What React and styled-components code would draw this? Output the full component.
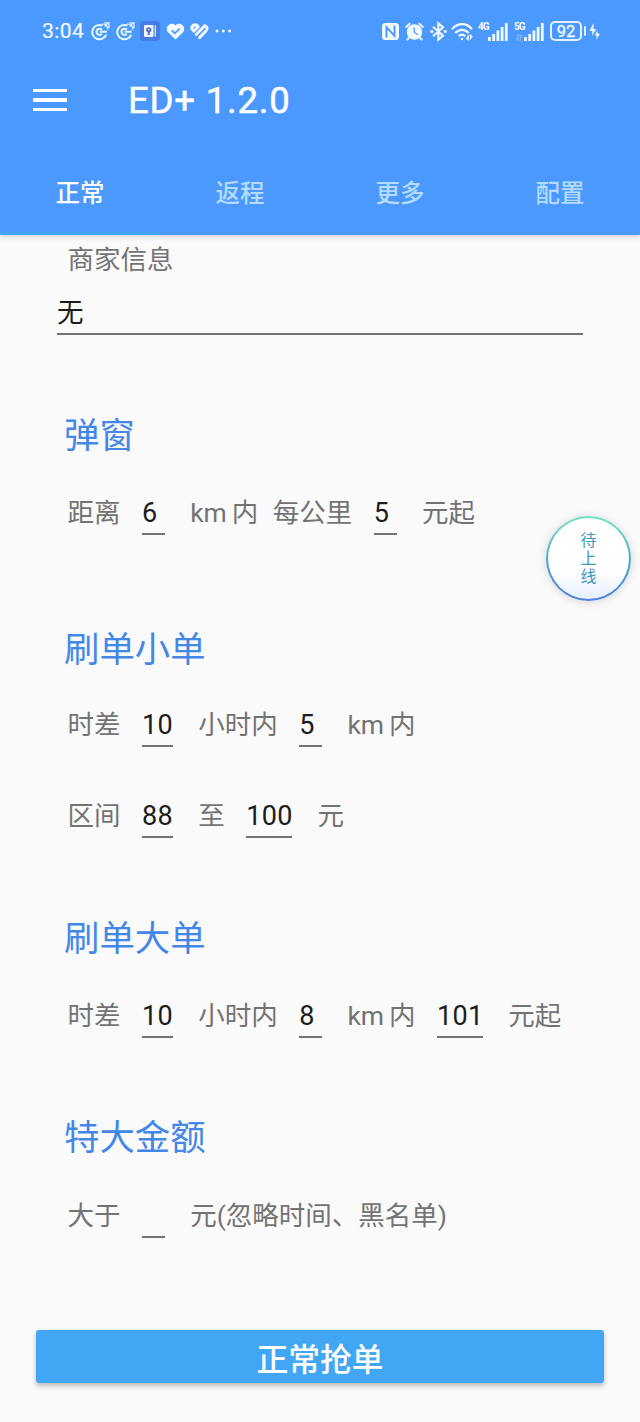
import React, { useState } from "react";
import styled, { createGlobalStyle } from "styled-components";

const tabs = ["正常", "返程", "更多", "配置"];

export default function App() {
  const [active, setActive] = useState(0);

  return (
    <>
      <GlobalStyle />
      <Screen>
        <Header>
          <StatusBar />
          <TitleBar>
            <MenuButton aria-label="menu">
              <MenuLine />
              <MenuLine />
              <MenuLine />
            </MenuButton>
            <Title>ED+ 1.2.0</Title>
          </TitleBar>
          <Tabs>
            {tabs.map((tab, i) => (
              <Tab key={tab} $active={i === active} onClick={() => setActive(i)}>
                {tab}
              </Tab>
            ))}
          </Tabs>
        </Header>

        <Content>
          <FieldLabel>商家信息</FieldLabel>
          <WideField>无</WideField>

          <Section $top={77}>
            <Heading $bottom={29}>弹窗</Heading>
            <Row>
              <Label>距离</Label>
              <Value>6</Value>
              <Label><Unit>km</Unit>内</Label>
              <NextLabel>每公里</NextLabel>
              <Value>5</Value>
              <Label>元起</Label>
            </Row>
          </Section>

          <Section $top={91}>
            <Heading $bottom={27}>刷单小单</Heading>
            <Row>
              <Label>时差</Label>
              <Value $width={31}>10</Value>
              <Label>小时内</Label>
              <Value>5</Value>
              <Label><Unit>km</Unit>内</Label>
            </Row>
            <Row $top={45}>
              <Label>区间</Label>
              <Value $width={31}>88</Value>
              <Label>至</Label>
              <Value $width={46}>100</Value>
              <Label>元</Label>
            </Row>
          </Section>

          <Section $top={77}>
            <Heading $bottom={29}>刷单大单</Heading>
            <Row>
              <Label>时差</Label>
              <Value $width={31}>10</Value>
              <Label>小时内</Label>
              <Value>8</Value>
              <Label><Unit>km</Unit>内</Label>
              <Value $width={46}>101</Value>
              <Label>元起</Label>
            </Row>
          </Section>

          <Section $top={76}>
            <Heading $bottom={30}>特大金额</Heading>
            <Row>
              <Label>大于</Label>
              <Value />
              <Label>元(忽略时间、黑名单)</Label>
            </Row>
          </Section>
        </Content>

        <SubmitButton>正常抢单</SubmitButton>

        <FloatingBall>
          <span>待</span>
          <span>上</span>
          <span>线</span>
        </FloatingBall>
      </Screen>
    </>
  );
}

function StatusBar() {
  return (
    <StatusRow>
      <Clock>3:04</Clock>
      <LeftIcons>
        <SyncIcon />
        <SyncIcon />
        <AppIcon />
        <svg width="19" height="17" viewBox="0 0 19 17">
          <path d="M9.5 16.500 2 9.200C-2 4.400 4.600-2.200 9.500 2.400c4.900-4.600 11.500 2 7.500 6.800z" fill="#f2fbff" />
          <path d="M5.800 7.400l3 3 4.800-4.700" fill="none" stroke="#4b98ff" strokeWidth="1.700" />
        </svg>
        <svg width="19" height="17" viewBox="0 0 19 17" fill="none" stroke="#f2fbff" strokeLinecap="round">
          <path d="M2.300 6.300C.8 2.500 5 .8 7.500 2.800" strokeWidth="3.200" />
          <path d="M3.700 8.300l4.500-4.400M6.300 11.500l7.700-8M9.600 14.600l6.500-6.900c1.800-2 .8-4.900-1.700-5.100" strokeWidth="2.900" />
        </svg>
        <svg width="17" height="4" viewBox="0 0 17 4" fill="#f2fbff">
          <circle cx="2" cy="2" r="1.500" />
          <circle cx="8.300" cy="2" r="1.500" />
          <circle cx="14.600" cy="2" r="1.500" />
        </svg>
      </LeftIcons>
      <RightIcons />
    </StatusRow>
  );
}

function SyncIcon() {
  return (
    <svg width="19" height="19" viewBox="0 0 19 19" fill="none" stroke="#e6fbff">
      <path d="M11.500 3.600A7.200 7.200 0 1 0 15.200 12.600" strokeWidth="2" />
      <path d="M15.800 9.800H8.600M10.900 7.700a3.100 3.100 0 1 0 0 4.200" strokeWidth="2" />
      <path d="M11 2c3.700-.2 6 2.200 6 5.700M13 1l5-.1v5M13.600 4.600l3.200-3.200" strokeWidth="1.200" />
    </svg>
  );
}

function AppIcon() {
  return (
    <svg width="20" height="20" viewBox="0 0 20 20">
      <rect width="20" height="20" rx="4" fill="#477ce2" />
      <rect x="4" y="4" width="9.500" height="12" rx="1.200" fill="#f1f8ff" />
      <path d="M15.300 4.500v11" stroke="#dcecff" strokeWidth="1.300" />
      <circle cx="8.800" cy="8.800" r="2.600" fill="#4b70bd" />
      <path d="M8.800 8v6" stroke="#4b70bd" strokeWidth="2" />
      <circle cx="8.800" cy="8.600" r=".8" fill="#f1f8ff" />
    </svg>
  );
}

function SignalBars() {
  return (
    <svg width="20" height="19" viewBox="0 0 20 19" fill="#eefaff">
      <rect x="0" y="15" width="2.800" height="4" />
      <rect x="4.300" y="12" width="2.800" height="7" />
      <rect x="8.500" y="8.500" width="2.800" height="10.500" />
      <rect x="12.700" y="5" width="2.800" height="14" />
      <rect x="16.900" y="1" width="2.800" height="18" />
    </svg>
  );
}

function RightIcons() {
  return (
    <RightGroup>
      <svg width="17" height="17" viewBox="0 0 17 17">
        <rect width="17" height="17" rx="3.500" fill="#f2fbff" />
        <path d="M4.500 14.500V4.200l8 8.600V2.500" fill="none" stroke="#4b98ff" strokeWidth="1.900" />
      </svg>
      <svg width="19" height="19" viewBox="0 0 19 19">
        <circle cx="9.500" cy="10" r="7.700" fill="#f2fbff" />
        <path d="M1.200 4.900 4.700 1.800M17.800 4.900 14.300 1.800M4.400 15.200l-2 2.500M14.600 15.200l2 2.500" stroke="#f2fbff" strokeWidth="2" strokeLinecap="round" />
        <path d="M9.300 5.500v5l3.600 2.200" fill="none" stroke="#4b98ff" strokeWidth="1.300" />
      </svg>
      <svg width="17" height="21" viewBox="0 0 17 21" fill="none" stroke="#f2fbff" strokeWidth="2.100">
        <path d="M3 5.700l10 9-4.700 4V2.300l4.700 4-10 9" />
        <path d="M.4 10.500h3M13.700 10.500h3" strokeWidth="2.400" />
      </svg>
      <WifiIcon width="23" height="19" viewBox="0 0 23 19" fill="none" stroke="#f2fbff" strokeWidth="2.200">
        <path d="M1 7.200c5.800-6.700 14.400-6.700 20 0M4.300 11c4-4.300 9.400-4.300 13.400 0" />
        <path d="M7.700 14.200c2.200-2 4.500-2 6.500 0" />
        <circle cx="11" cy="17" r="1.200" fill="#f2fbff" stroke="none" />
        <path d="M17 13.300v4l-1.800-1.600M19.500 17.500v-4l1.800 1.600" strokeWidth="1.500" />
      </WifiIcon>
      <Network>
        <NetLabel>4G</NetLabel>
        <SignalBars />
      </Network>
      <Network>
        <NetLabel>
          5G
          <svg width="8" height="7" viewBox="0 0 8 7" fill="none" stroke="#7db5ff" strokeWidth="1.400">
            <path d="M3 0v6L1 4M5.300 7V1l2 2" />
          </svg>
        </NetLabel>
        <SignalBars />
      </Network>
      <Battery>
        <BatteryBody>92</BatteryBody>
        <BatteryTip />
        <svg width="11" height="17" viewBox="0 0 11 17" fill="#f2fbff">
          <path d="M4.500 0 .5 8h3L3 13l4.200-7H4.500z" />
          <path d="M8.500 7 5.800 12.500h2L7.400 17l3.500-6.200H8.500z" />
        </svg>
      </Battery>
    </RightGroup>
  );
}

const GlobalStyle = createGlobalStyle`
  body {
    margin: 0;
    background: #fafafa;
    font-family: Roboto, "Noto Sans CJK SC", sans-serif;
  }
  * {
    box-sizing: border-box;
  }
  svg {
    display: block;
    flex: none;
  }
`;

const Screen = styled.div`
  position: relative;
  width: 640px;
  height: 1422px;
  display: flex;
  flex-direction: column;
  background: #fafafa;
  overflow: hidden;
`;

const Header = styled.header`
  height: 235px;
  flex: none;
  display: flex;
  flex-direction: column;
  background: #4b98ff;
  box-shadow: 0 1px 6px rgba(0, 0, 0, 0.2);
`;

const StatusRow = styled.div`
  height: 62px;
  display: flex;
  align-items: center;
  padding: 0 40px 0 42px;
  color: #f2fbff;
`;

const Clock = styled.div`
  width: 49px;
  font-size: 21px;
  letter-spacing: 0.4px;
  white-space: nowrap;
  -webkit-text-stroke: 0.2px #f2fbff;
`;

const LeftIcons = styled.div`
  display: flex;
  align-items: center;
  gap: 5.5px;
`;

const RightGroup = styled.div`
  display: flex;
  align-items: center;
  gap: 6px;
  margin-left: auto;
`;

const WifiIcon = styled.svg`
  margin: 0 -2px;
`;

const Network = styled.div`
  display: flex;
  width: 30px;
  height: 19px;
`;

const NetLabel = styled.div`
  width: 10px;
  font: 700 10px/10px Roboto, sans-serif;
  letter-spacing: -1px;

  svg {
    margin: 2px 0 0 1px;
  }
`;

const Battery = styled.div`
  display: flex;
  align-items: center;
  gap: 2px;
`;

const BatteryBody = styled.div`
  width: 32px;
  height: 20px;
  border: 2px solid #e2f2ff;
  border-radius: 5px;
  font-size: 16.5px;
  line-height: 17px;
  text-align: center;
  -webkit-text-stroke: 0.3px #f2fbff;
`;

const BatteryTip = styled.div`
  width: 2px;
  height: 10px;
  margin-right: 1px;
  border-radius: 1px;
  background: #e2f2ff;
`;

const TitleBar = styled.div`
  height: 76px;
  display: flex;
  align-items: center;
  padding-left: 33px;
`;

const MenuButton = styled.button`
  width: 34px;
  padding: 0;
  border: none;
  background: none;
  display: flex;
  flex-direction: column;
  gap: 6px;
  cursor: pointer;
`;

const MenuLine = styled.span`
  width: 100%;
  height: 3.5px;
  background: #fff;
`;

const Title = styled.h1`
  margin: 0 0 0 61px;
  color: #fff;
  font-size: 36.5px;
  font-weight: 400;
  letter-spacing: 0.8px;
  -webkit-text-stroke: 0.5px #fff;
`;

const Tabs = styled.nav`
  flex: 1;
  display: grid;
  grid-template-columns: repeat(4, 1fr);
`;

const Tab = styled.button`
  padding: 12px 0 0;
  border: none;
  border-bottom: 3px solid ${(props) => (props.$active ? "#40a6fa" : "transparent")};
  background: none;
  color: ${(props) => (props.$active ? "#fff" : "#b3dcff")};
  font-family: inherit;
  font-size: 24.5px;
  font-weight: 500;
  cursor: pointer;
`;

const Content = styled.main`
  height: 1095px;
  flex: none;
  display: flex;
  flex-direction: column;
  padding: 5px 57px 0;
`;

const FieldLabel = styled.div`
  padding-left: 10.5px;
  color: #737373;
  font-size: 26.5px;
  line-height: 40px;
`;

const WideField = styled.div`
  height: 55px;
  border-bottom: 2px solid #737373;
  color: #1c1c1c;
  font-size: 26.5px;
  line-height: 66px;
`;

const Section = styled.section`
  margin-top: ${(props) => props.$top}px;
`;

const Heading = styled.h2`
  margin: 0 0 ${(props) => props.$bottom}px 7px;
  color: #4387e8;
  font-size: 35.4px;
  font-weight: 400;
  line-height: 48px;
`;

const Row = styled.div`
  height: 46px;
  display: flex;
  margin-top: ${(props) => props.$top || 0}px;
  padding-left: 10.5px;
  font-size: 26.5px;
  line-height: 48px;
  white-space: nowrap;
`;

const Label = styled.span`
  color: #737373;
`;

const NextLabel = styled(Label)`
  margin-left: 14.5px;
`;

const Unit = styled.span`
  margin-right: 5px;
`;

const Value = styled.span`
  width: ${(props) => props.$width || 23}px;
  margin: 0 25.2px 0 21.5px;
  border-bottom: 2px solid #737373;
  color: #1c1c1c;
  font-size: 27px;
  letter-spacing: 0.3px;
`;

const SubmitButton = styled.button`
  height: 53px;
  flex: none;
  margin: 0 36px;
  padding: 1px 0 0;
  border: none;
  border-radius: 3px;
  background: #41a7f4;
  box-shadow: 0 3px 5px rgba(0, 0, 0, 0.25);
  color: #fff;
  font-family: inherit;
  font-size: 31.8px;
  font-weight: 500;
  cursor: pointer;
`;

const FloatingBall = styled.div`
  position: absolute;
  top: 516px;
  left: 546px;
  width: 85px;
  height: 85px;
  display: flex;
  flex-direction: column;
  align-items: center;
  justify-content: center;
  border: 2px solid transparent;
  border-radius: 50%;
  background: linear-gradient(#fff 65%, #e6efff) padding-box,
    linear-gradient(#74e3c0, #4bacc9 50%, #537ee0) border-box;
  box-shadow: 0 1px 10px rgba(0, 0, 0, 0.15);
  color: #3f98bd;
  font-size: 16px;
  line-height: 18px;
`;
